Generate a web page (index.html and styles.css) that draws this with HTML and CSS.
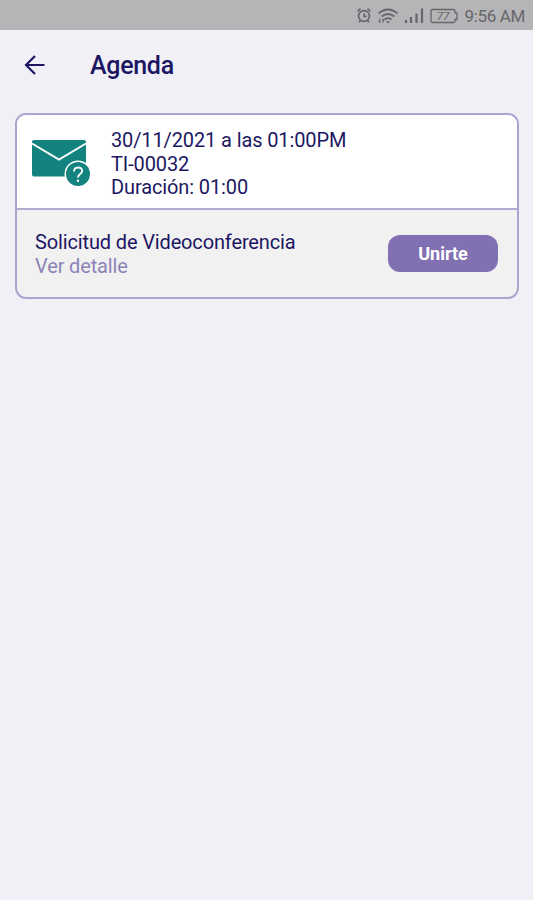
FILE: index.html
```html
<!DOCTYPE html>
<html lang="es">
<head>
<meta charset="utf-8">
<title>Agenda</title>
<link rel="stylesheet" href="styles.css">
</head>
<body>
<div class="status">
  <svg class="status-icons" width="105" height="20" viewBox="0 0 105 20" fill="none" stroke="currentColor" stroke-width="1.6">
    <circle cx="8" cy="10" r="5.4"/>
    <path d="M8 7.200v3.200h2.600M1.500 5.500l3-2.800M14.500 5.500l-3-2.800M4.500 14.500l-1.400 1.700M11.500 14.500l1.400 1.700"/>
    <path d="M22.500 7.500q9.500-8 19 0M25.500 10.500q6.500-5.200 13 0M28.500 13.400q3.500-2.600 7 0" stroke-width="1.900"/>
    <path d="M30 15.200h4l-2 2.200z" fill="currentColor" stroke="none"/>
    <path d="M24 12.500v4M22.600 15l1.400 1.600M27 16.800v-4M27 12.800l1.300 1.500" stroke-width="1.100"/>
    <path d="M50 14v3M55 11v6M60.500 7.500v9.500M66 2.500v14.500" stroke-width="2.200"/>
    <path d="M76.500 3.500h21a1.500 1.500 0 0 1 1.500 1.500v2h2v6.500H99V15a1.500 1.500 0 0 1-1.500 1.500h-21A1.500 1.500 0 0 1 75 15V5a1.500 1.500 0 0 1 1.500-1.500z" stroke-width="1.300"/>
    <text class="battery" x="87" y="14.200">77</text>
  </svg>
  <span class="time">9:56 AM</span>
</div>
<header class="bar">
  <svg class="back" width="22" height="22" viewBox="0 0 22 22" fill="none" stroke="currentColor" stroke-width="2.200"><path d="M20.500 11H2.500M11 2L2 11l9 9"/></svg>
  <h1 class="title">Agenda</h1>
</header>
<main class="card">
  <section class="info">
    <svg class="mail" width="60" height="50" viewBox="0 0 60 50">
      <rect x="1" y="2" width="54" height="36.500" rx="2" fill="#13837f"/>
      <path d="M1 5.500L28 21.500L55 5.500" fill="none" stroke="#fff" stroke-width="2"/>
      <circle cx="47" cy="36" r="13.500" fill="#fff"/>
      <circle cx="47" cy="36" r="12" fill="#13837f"/>
      <path d="M43 33.600c0-5.400 8.200-5.400 8.200-.6 0 3.200-4.200 3-4.200 6.500" fill="none" stroke="#fff" stroke-width="1.900"/>
      <circle cx="47" cy="42.700" r="1.200" fill="#fff"/>
    </svg>
    <div class="lines">
      <div class="date">30/11/2021 a las 01:00PM</div>
      <div class="code">TI-00032</div>
      <div class="duration">Duración: 01:00</div>
    </div>
  </section>
  <section class="action">
    <div class="request">
      <div class="subject">Solicitud de Videoconferencia</div>
      <a class="detail">Ver detalle</a>
    </div>
    <button class="join">Unirte</button>
  </section>
</main>
</body>
</html>
```
FILE: styles.css
```css
* { box-sizing: border-box; }
body {
  margin: 0;
  min-height: 900px;
  background: #f0f0f6;
  color: #1d1763;
  font-family: Roboto, "Liberation Sans", sans-serif;
}
.status {
  height: 30px;
  padding: 1px 8px 0 0;
  display: flex;
  align-items: center;
  justify-content: flex-end;
  gap: 4px;
  background: #b5b5b7;
  color: #66666a;
}
.battery {
  fill: currentColor;
  stroke: none;
  font-size: 11.5px;
  font-style: italic;
  text-anchor: middle;
}
.time { font-size: 17px; line-height: 20px; letter-spacing: -0.35px; }
.bar {
  height: 83px;
  padding: 0 24px 13px;
  display: flex;
  align-items: center;
  gap: 44px;
}
.title {
  margin: 2px 0 0;
  font-size: 25px;
  font-weight: 500;
  line-height: 30px;
  letter-spacing: -0.3px;
}
.card {
  width: 504px;
  height: 186px;
  margin-left: 15px;
  border: 2px solid #aca4cf;
  border-radius: 11px;
  overflow: hidden;
  background: #f1f1f2;
}
.info {
  height: 95px;
  padding: 14px 14px 0;
  display: flex;
  gap: 20px;
  background: #fff;
  border-bottom: 2px solid #b1aad2;
}
.mail { margin-top: 9px; flex: none; }
.lines {
  padding-top: 0.4px;
  font-size: 20px;
  line-height: 23.4px;
  letter-spacing: -0.12px;
  white-space: nowrap;
}
.action {
  height: 87px;
  padding: 0 19px 0 18px;
  display: flex;
  align-items: center;
  justify-content: space-between;
}
.request { padding-top: 1px; letter-spacing: -0.14px; }
.subject, .detail { display: block; font-size: 20px; line-height: 24.5px; }
.detail { color: #8d83b7; }
.join {
  width: 110px;
  height: 37px;
  padding: 0;
  border: 0;
  border-radius: 12px;
  background: #8171b3;
  color: #fff;
  font: 700 18px/37px Roboto, sans-serif;
}
```
